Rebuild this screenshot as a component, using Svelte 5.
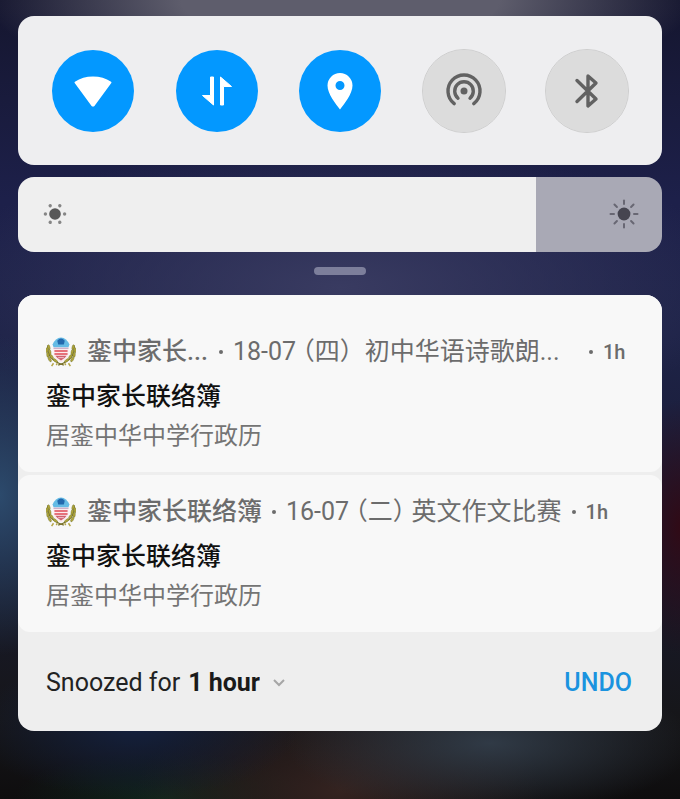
<script lang="ts">
  type Notification = {
    app: string,
    summary: string,
    age: string,
    title: string,
    body: string,
    clipped: boolean,
  }

  const notifications: Notification[] = [
    {
      app: '銮中家长...',
      summary: '18-07 （四）\u00a0 初中华语诗歌朗...',
      age: '1h',
      title: '銮中家长联络簿',
      body: '居銮中华中学行政历',
      clipped: true,
    },
    {
      app: '銮中家长联络簿',
      summary: '16-07 （二） 英文作文比赛',
      age: '1h',
      title: '銮中家长联络簿',
      body: '居銮中华中学行政历',
      clipped: false,
    },
  ]

  let toggles = $state([
    { id: 'wifi', label: 'Wi-Fi', on: true },
    { id: 'data', label: 'Mobile data', on: true },
    { id: 'location', label: 'Location', on: true },
    { id: 'hotspot', label: 'Hotspot', on: false },
    { id: 'bluetooth', label: 'Bluetooth', on: false },
  ])

  let brightness = $state(804)
  let snooze = $state('1 hour')

  const rays = [0, 45, 90, 135, 180, 225, 270, 315]
  const dots = [0, 60, 120, 180, 240, 300]
  const leaves = [
    [-13, -5, -14], [-12, 0, -12], [-10, 5, -35], [-6, 9, -55],
    [-15, -2, 8], [-14, 3, -5], [-12, 8, -30],
  ]
</script>

{#snippet emblem()}
  <svg class="emblem" viewBox="-16 -16 32 32" aria-hidden="true">
    {#each [1, -1] as side}
      <g transform="scale({side} 1)">
        <path d="M-14 -7C-15 3 -11 9 3 14" fill="none" stroke="#777028" stroke-width="1.3"/>
        {#each leaves as [x, y, turn]}
          <ellipse cx={x} cy={y} rx="1.3" ry="2.8" fill="#b0a53a" stroke="#6b6f33" stroke-width=".4" transform="rotate({turn} {x} {y})"/>
        {/each}
        <path d="M-8 12l-2 3M-4 12l-1 2" stroke="#b3a447" stroke-width="1.6"/>
      </g>
    {/each}
    <path d="M-8 -5H8V2C8 6 4 9 0 11C-4 9 -8 6 -8 2Z" fill="#fbecef"/>
    <path d="M-9 -8Q-6 -15 0 -15.500Q6 -15 9 -8L8 -5H-8Z" fill="#65bbe5"/>
    <path d="M-4 -12Q0 -17 4 -12L3 -8H-3Z" fill="#2369ae"/>
    <path d="M-8 -4H8" stroke="#bb98bc" stroke-width="1"/>
    <path d="M-7 -1H7M-7 2H7" stroke="#e04a55" stroke-width="1.6"/>
    <path d="M-6 4H6Q4 7 0 9Q-4 7 -6 4Z" fill="#cd626f"/>
    <path d="M-3 6H3" stroke="#f5c8ce" stroke-width="1"/>
  </svg>
{/snippet}

<main>
  <section class="panel toggles">
    {#each toggles as toggle (toggle.id)}
      <button
        class="toggle"
        class:on={toggle.on}
        aria-label={toggle.label}
        aria-pressed={toggle.on}
        onclick={() => toggle.on = !toggle.on}
      >
        <svg viewBox="-21 -21 42 42" aria-hidden="true">
          {#if toggle.id === 'wifi'}
            <path class="solid" d="M-17.500 -8.500Q-10 -13.500 0 -13.500Q10 -13.500 17.500 -8.500L1 14Q0 15 -1 14Z"/>
          {:else if toggle.id === 'data'}
            <path class="solid thin" d="M-6.500 -14H-3.500V14L-14.500 4.500H-6.500Z"/>
            <path class="solid thin" d="M6.500 14H3.500V-14L14.500 -4.500H6.500Z"/>
          {:else if toggle.id === 'location'}
            <path fill="currentColor" fill-rule="evenodd" d="M0 18.500C-4 13 -12.500 3 -12.500 -5.500A12.500 12.500 0 0 1 12.500 -5.500C12.500 3 4 13 0 18.500ZM0 -10A4.500 4.500 0 1 0 0 -1A4.500 4.500 0 1 0 0 -10Z"/>
          {:else if toggle.id === 'hotspot'}
            <circle r="3.500" fill="currentColor"/>
            <path class="line" d="M-6 7.200A9.300 9.300 0 1 1 6 7.200"/>
            <path class="line" d="M-9.800 12.700A16 16 0 1 1 9.800 12.700"/>
          {:else}
            <path class="line" d="M-10 -10.500L9 8L1 15V-15L9 -8L-10 10.500"/>
          {/if}
        </svg>
      </button>
    {/each}
  </section>

  <section class="panel brightness">
    <input
      type="range"
      min="0"
      max="1000"
      aria-label="Brightness"
      bind:value={brightness}
      style:--level="{brightness / 10}%"
    />
    <svg class="sun low" viewBox="-15 -15 30 30" aria-hidden="true">
      <circle r="5.800" fill="#585858"/>
      {#each dots as turn}
        <circle cx="9.600" r="1.700" fill="#868686" transform="rotate({turn})"/>
      {/each}
    </svg>
    <svg class="sun high" viewBox="-15 -15 30 30" aria-hidden="true">
      <circle r="6.400" fill="#464550"/>
      {#each rays as turn}
        <path d="M10 0H13.500" stroke="#686773" stroke-width="2" stroke-linecap="round" transform="rotate({turn})"/>
      {/each}
    </svg>
  </section>

  <div class="handle"></div>

  <section class="panel list">
    {#each notifications as item}
      <article>
        <header class:clipped={item.clipped}>
          {@render emblem()}
          <span class="app">{item.app}</span>
          <i></i>
          <span class="summary">{item.summary}</span>
          <i></i>
          <time>{item.age}</time>
        </header>
        <h2>{item.title}</h2>
        <p>{item.body}</p>
      </article>
    {/each}

    <footer>
      <label for="snooze">Snoozed for</label>
      <select id="snooze" bind:value={snooze}>
        <option>1 hour</option>
      </select>
      <svg class="chevron" viewBox="0 0 14 8" aria-hidden="true">
        <path d="M2 1L7 6L12 1"/>
      </svg>
      <button class="undo">UNDO</button>
    </footer>
  </section>
</main>

<style>
  :global(body) {
    margin: 0;
    background: #101014;
  }

  main {
    box-sizing: border-box;
    min-height: 100vh;
    padding: 16px 18px;
    font-family: Roboto, "Noto Sans CJK SC", sans-serif;
    background:
      radial-gradient(ellipse 52% 12% at 50% 0, #5e5d6c 45%, transparent),
      radial-gradient(ellipse 14% 20% at 0 62%, #2c4a6c, transparent),
      radial-gradient(ellipse 8% 16% at 100% 66%, #300a16, transparent),
      radial-gradient(ellipse 60% 18% at 50% 36%, #393b61, transparent),
      radial-gradient(ellipse 30% 9% at 72% 93%, #303a46, transparent),
      radial-gradient(ellipse 24% 9% at 20% 91%, #14203d, transparent),
      radial-gradient(ellipse 30% 12% at 50% 99%, #342320, transparent),
      radial-gradient(ellipse 22% 6% at 24% 100%, #10251c, transparent),
      linear-gradient(#15162f, #1d204a 25%, #1e2348 42%, #181a2e 70%, #161619 90%, #0e0d0e);
  }

  .panel {
    border-radius: 16px;
    overflow: hidden;
  }

  button,
  select {
    padding: 0;
    border: 0;
    background: none;
    font-family: inherit;
    cursor: pointer;
  }

  .toggles {
    display: flex;
    justify-content: space-between;
    padding: 33px 33px 32px;
    background: #eeeef0;
  }

  .toggle {
    display: grid;
    place-items: center;
    box-sizing: border-box;
    width: 84px;
    height: 84px;
    border: 1px solid #cecece;
    border-radius: 50%;
    background: #dcdcdc padding-box;
    color: #626262;

    &.on {
      border-color: transparent;
      background-color: #0398ff;
      color: #fff;
    }

    svg {
      width: 42px;
      height: 42px;
    }
  }

  .solid {
    fill: currentColor;
    stroke: currentColor;
    stroke-width: 2;
    stroke-linejoin: round;
  }

  .thin {
    stroke-width: 1;
  }

  .line {
    fill: none;
    stroke: currentColor;
    stroke-width: 3.4;
    stroke-linecap: round;
    stroke-linejoin: round;
  }

  .brightness {
    position: relative;
    height: 75px;
    margin-top: 12px;

    input {
      display: block;
      width: 100%;
      height: 100%;
      margin: 0;
      appearance: none;
      background: linear-gradient(to right, #efefef var(--level), #a9a9b5 var(--level));
    }

    input::-webkit-slider-thumb {
      appearance: none;
      width: 1px;
      height: 75px;
      background: transparent;
    }
  }

  /* icons lie over the slider track */
  .sun {
    position: absolute;
    top: 22px;
    width: 30px;
    height: 30px;
    pointer-events: none;
  }

  .low {
    left: 22px;
  }

  .high {
    right: 23px;
  }

  .handle {
    width: 52px;
    height: 8px;
    margin: 15px auto 20px;
    border-radius: 4px;
    background: #7d7f9b;
  }

  .list {
    background: #eeeeee;
  }

  article {
    padding: 21px 28px 16px;
    border-radius: 12px;
    background: #f8f8f8;

    &:first-child {
      padding-top: 41px;
    }

    & + article {
      margin-top: 3px;
    }
  }

  header {
    display: flex;
    align-items: center;
    margin-bottom: 10px;
    color: #6c6c6c;
    font-size: 25px;
    line-height: 32px;
    white-space: nowrap;
    font-feature-settings: "halt";

    i {
      flex: none;
      width: 4px;
      height: 4px;
      margin: 0 10px;
      border-radius: 50%;
      background: #6c6c6c;
    }

    &.clipped .app {
      min-width: 122px;
    }

    &.clipped .summary {
      width: 346px;
    }
  }

  .emblem {
    flex: none;
    width: 30px;
    height: 30px;
    margin-right: 11px;
  }

  .app {
    font-weight: 500;
  }

  .summary {
    overflow: hidden;
  }

  time {
    font-size: 20px;
    font-weight: 500;
  }

  h2 {
    margin: 0;
    color: #111;
    font-size: 25px;
    font-weight: 500;
    line-height: 38px;
  }

  p {
    margin: 0;
    color: #747474;
    font-size: 24px;
    line-height: 40px;
  }

  footer {
    display: flex;
    align-items: center;
    padding: 35px 30px 32px 28px;
    color: #222;
    font-size: 25px;
    line-height: 32px;
  }

  select {
    margin-left: 8px;
    appearance: none;
    field-sizing: content;
    color: #1a1a1a;
    font-size: 25px;
    font-weight: 700;
    line-height: 32px;
  }

  .chevron {
    width: 14px;
    height: 8px;
    margin-left: 12px;

    path {
      fill: none;
      stroke: #a6a6a6;
      stroke-width: 2;
    }
  }

  .undo {
    margin-left: auto;
    color: #1a93df;
    font-size: 25px;
    font-weight: 500;
    line-height: 32px;
  }
</style>
